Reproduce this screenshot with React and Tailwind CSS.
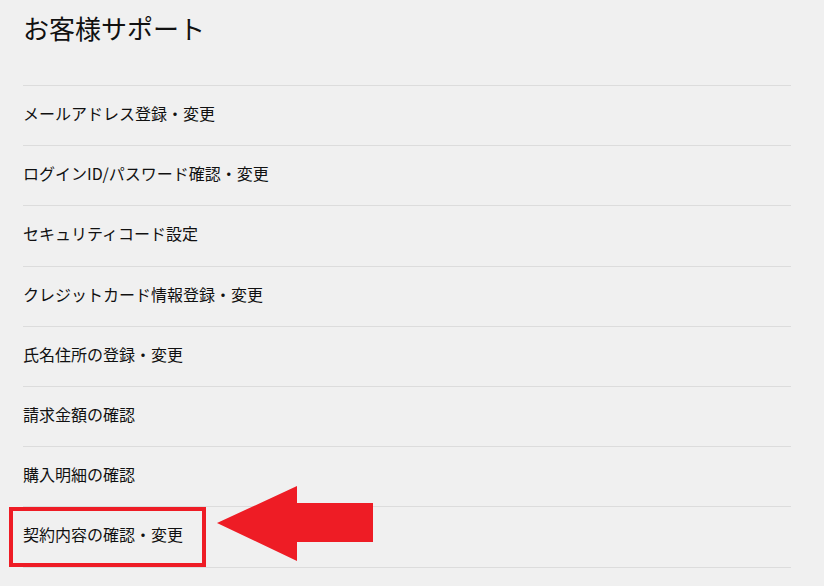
const items = [
  "メールアドレス登録・変更",
  "ログインID/パスワード確認・変更",
  "セキュリティコード設定",
  "クレジットカード情報登録・変更",
  "氏名住所の登録・変更",
  "請求金額の確認",
  "購入明細の確認",
  "契約内容の確認・変更",
];

export default function App() {
  return (
    <div
      className="relative min-h-[586px] w-[824px] overflow-hidden bg-[#f0f0f0] text-[#111]"
      style={{ fontFamily: '"Noto Sans CJK JP", "Noto Sans", sans-serif' }}
    >
      <div className="ml-[23px] w-[768px]">
        <h1 className="h-[85px] pt-[14px] text-[26px] leading-[28px] font-normal">お客様サポート</h1>
        <ul>
          {items.map((label) => (
            <li
              key={label}
              className="flex h-[60.2px] items-center border-t border-[#dcdcdc] pb-[5px] text-[16px] leading-none"
            >
              {label}
            </li>
          ))}
          <li className="border-t border-[#dcdcdc]" />
        </ul>
      </div>

      {/* highlight box */}
      <div className="absolute left-[9px] top-[507px] h-[60px] w-[197px] border-4 border-[#ee1c25]" />

      {/* arrow */}
      <svg
        className="absolute left-[215px] top-[484px]"
        width="162"
        height="80"
        viewBox="0 0 162 80"
        aria-hidden="true"
      >
        <path d="M2 39 L82 2 L82 19 L158 19 L158 58 L82 58 L82 77 Z" fill="#ee1c25" />
      </svg>
    </div>
  );
}
